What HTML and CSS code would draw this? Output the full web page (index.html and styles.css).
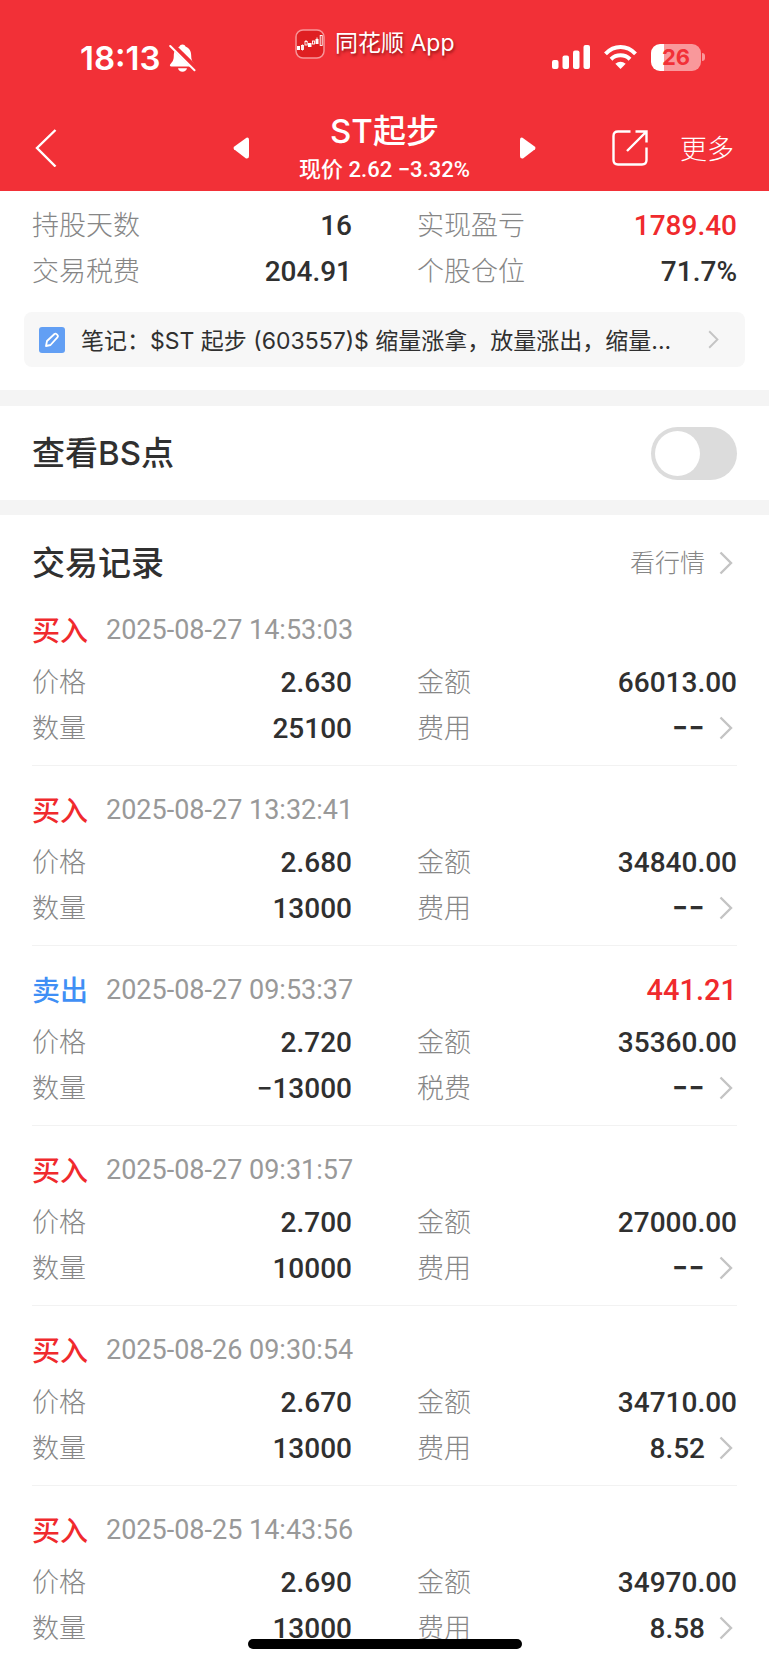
FILE: index.html
```html
<!DOCTYPE html>
<html lang="zh-CN">
<head>
<meta charset="utf-8">
<meta name="viewport" content="width=device-width, initial-scale=1">
<title>ST起步</title>
<link rel="stylesheet" href="styles.css">
</head>
<body>
<svg class="defs" aria-hidden="true">
  <symbol id="chevron" viewBox="0 0 14 24"><path d="M1.500 1.500L12 12L1.500 22.500" fill="none" stroke="currentColor" stroke-width="2.400"/></symbol>
</svg>
<header class="top">
  <div class="status">
    <div class="status-time">
      <span class="clock">18:13</span>
      <svg class="bell" viewBox="0 0 27 28" aria-hidden="true">
        <path d="M13.500 .5c-1.500 0-2.600.8-3 2C6.500 4 4.800 7.500 4.800 11.500c0 5-1.500 6.500-3.500 8.700-.8 1-.4 2.300 1 2.300h22.400c1.400 0 1.800-1.300 1-2.300-2-2.200-3.500-3.700-3.500-8.700 0-4-1.700-7.500-5.700-9-.4-1.200-1.500-2-3-2zM9 24.300h9c-.5 2-2.200 3.400-4.500 3.400S9.500 26.300 9 24.300z" fill="#fff"/>
        <path d="M2.500.5L27 24.500" stroke="#f23037" stroke-width="5.500"/>
        <path d="M1.200 2L25.500 26.300" stroke="#fff" stroke-width="2" stroke-linecap="round"/>
      </svg>
    </div>
    <div class="app-tag">
      <svg class="app-icon" viewBox="0 0 30 30" aria-hidden="true">
        <rect x="1" y="1" width="28" height="28" rx="7" fill="#df1f22" stroke="#f79598" stroke-width="1.500"/>
        <g fill="#fff"><rect x="2" y="17" width="3" height="4"/><rect x="13" y="14" width="3.500" height="4"/><rect x="20.500" y="10" width="3" height="5"/></g>
        <g fill="none" stroke="#fff" stroke-width=".9"><rect x="6.500" y="16.500" width="2" height="4"/><rect x="10" y="12.500" width="2.200" height="3.500"/><path d="M11 11v1.500M22 8.500v2M7.500 15.500v6"/><rect x="17.500" y="12" width="2" height="3"/><rect x="25.200" y="6.500" width="2" height="10"/></g>
      </svg>
      <span>同花顺 App</span>
    </div>
    <div class="status-icons">
      <svg class="signal" viewBox="0 0 38 24" fill="#fff" aria-hidden="true"><rect y="15" width="6.500" height="9" rx="2"/><rect x="10.500" y="10.500" width="6.500" height="13.500" rx="2"/><rect x="21" y="5.500" width="6.500" height="18.500" rx="2"/><rect x="31.500" width="6.500" height="24" rx="2"/></svg>
      <svg class="wifi" viewBox="0 0 33 24" aria-hidden="true"><g fill="none" stroke="#fff" stroke-width="4"><path d="M1.500 8.800Q8 2 16.500 2T31.500 8.800"/><path d="M7 14.200Q11 10.300 16.500 10.300T26 14.200"/></g><path d="M16.500 24l-5.200-5.200q5.200-4 10.400 0z" fill="#fff"/></svg>
      <div class="battery"><span>26</span></div>
      <span class="battery-cap"></span>
    </div>
  </div>
  <nav class="nav">
    <button class="plain back" aria-label="返回"><svg viewBox="0 0 22 38"><path d="M20.500 1L2 19L20.500 37.500" fill="none" stroke="#fff" stroke-width="2.400"/></svg></button>
    <div class="stock">
      <button class="plain tri" aria-label="上一只"><svg viewBox="0 0 16 22"><path d="M13.500 .7L1 9.700Q0 11 1 12.300L13 21.500Q16 22 16 19V3Q16 0 13.500 .7z" fill="#fff"/></svg></button>
      <div class="stock-text">
        <h1>ST起步</h1>
        <p>现价 2.62 −3.32%</p>
      </div>
      <button class="plain tri" aria-label="下一只"><svg viewBox="0 0 16 22"><path d="M2.500 .7L15 9.700Q16 11 15 12.300L3 21.500Q0 22 0 19V3Q0 0 2.500 .7z" fill="#fff"/></svg></button>
    </div>
    <div class="actions">
      <button class="plain share" aria-label="分享"><svg viewBox="0 0 36 36" fill="none" stroke="#fff" stroke-width="2.400"><path d="M18.500 1.500H6Q1.500 1.500 1.500 6V30Q1.500 34.500 6 34.500H30Q34.500 34.500 34.500 30V17.500"/><path d="M23.500 1.500H34.500V12.500M34 2L15 21"/></svg></button>
      <button class="plain more">更多</button>
    </div>
  </nav>
</header>

<main>
  <section class="summary">
    <dl class="pairs">
      <div><dt>持股天数</dt><dd>16</dd></div>
      <div><dt>实现盈亏</dt><dd class="red">1789.40</dd></div>
      <div><dt>交易税费</dt><dd>204.91</dd></div>
      <div><dt>个股仓位</dt><dd>71.7%</dd></div>
    </dl>
    <a class="note" href="#">
      <svg class="pen" viewBox="0 0 26 26" aria-hidden="true"><rect width="26" height="26" rx="3" fill="#629ff4"/><path d="M7 19l1-5 7.500-7q1-.8 2 .2l1 1q1 1 .1 2L11.500 18z" fill="none" stroke="#fff" stroke-width="1.800" stroke-linejoin="round"/></svg>
      <span class="note-text">笔记：$ST 起步 (603557)$ 缩量涨拿，放量涨出，缩量...</span>
      <svg class="chev small"><use href="#chevron"/></svg>
    </a>
  </section>

  <section class="bs">
    <label for="bs">查看BS点</label>
    <input id="bs" class="toggle" type="checkbox" role="switch">
  </section>

  <section class="records">
    <div class="records-head">
      <h2>交易记录</h2>
      <a href="#"><span>看行情</span><svg class="chev"><use href="#chevron"/></svg></a>
    </div>

    <article class="record">
      <div class="record-head"><strong>买入</strong><time>2025-08-27 14:53:03</time></div>
      <dl class="pairs">
        <div><dt>价格</dt><dd>2.630</dd></div>
        <div><dt>金额</dt><dd>66013.00</dd></div>
        <div><dt>数量</dt><dd>25100</dd></div>
        <div><dt>费用</dt><dd><span class="dash">--</span><svg class="chev"><use href="#chevron"/></svg></dd></div>
      </dl>
    </article>
    <article class="record">
      <div class="record-head"><strong>买入</strong><time>2025-08-27 13:32:41</time></div>
      <dl class="pairs">
        <div><dt>价格</dt><dd>2.680</dd></div>
        <div><dt>金额</dt><dd>34840.00</dd></div>
        <div><dt>数量</dt><dd>13000</dd></div>
        <div><dt>费用</dt><dd><span class="dash">--</span><svg class="chev"><use href="#chevron"/></svg></dd></div>
      </dl>
    </article>
    <article class="record">
      <div class="record-head"><strong class="sell">卖出</strong><time>2025-08-27 09:53:37</time><span class="profit">441.21</span></div>
      <dl class="pairs">
        <div><dt>价格</dt><dd>2.720</dd></div>
        <div><dt>金额</dt><dd>35360.00</dd></div>
        <div><dt>数量</dt><dd>−13000</dd></div>
        <div><dt>税费</dt><dd><span class="dash">--</span><svg class="chev"><use href="#chevron"/></svg></dd></div>
      </dl>
    </article>
    <article class="record">
      <div class="record-head"><strong>买入</strong><time>2025-08-27 09:31:57</time></div>
      <dl class="pairs">
        <div><dt>价格</dt><dd>2.700</dd></div>
        <div><dt>金额</dt><dd>27000.00</dd></div>
        <div><dt>数量</dt><dd>10000</dd></div>
        <div><dt>费用</dt><dd><span class="dash">--</span><svg class="chev"><use href="#chevron"/></svg></dd></div>
      </dl>
    </article>
    <article class="record">
      <div class="record-head"><strong>买入</strong><time>2025-08-26 09:30:54</time></div>
      <dl class="pairs">
        <div><dt>价格</dt><dd>2.670</dd></div>
        <div><dt>金额</dt><dd>34710.00</dd></div>
        <div><dt>数量</dt><dd>13000</dd></div>
        <div><dt>费用</dt><dd>8.52<svg class="chev"><use href="#chevron"/></svg></dd></div>
      </dl>
    </article>
    <article class="record">
      <div class="record-head"><strong>买入</strong><time>2025-08-25 14:43:56</time></div>
      <dl class="pairs">
        <div><dt>价格</dt><dd>2.690</dd></div>
        <div><dt>金额</dt><dd>34970.00</dd></div>
        <div><dt>数量</dt><dd>13000</dd></div>
        <div><dt>费用</dt><dd>8.58<svg class="chev"><use href="#chevron"/></svg></dd></div>
      </dl>
    </article>
  </section>
</main>
<div class="home-bar"></div>
</body>
</html>
```
FILE: styles.css
```css
* { box-sizing: border-box; }
html { height: 100%; overflow: hidden; }
body {
  margin: 0;
  height: 100%;
  overflow: hidden;
  background: #fff;
  color: #303030;
  font-family: Inter, "Noto Sans CJK SC", sans-serif;
}
h1, h2, p, dl, dd { margin: 0; }
a { color: inherit; text-decoration: none; }
svg { display: block; flex: none; }
.defs { position: absolute; width: 0; height: 0; }
.plain {
  border: 0;
  padding: 0;
  background: none;
  color: inherit;
  font: inherit;
}

.top { background: #f23037; color: #fff; }
.status {
  display: grid;
  grid-template-columns: 215px 1fr auto;
  height: 104px;
  padding: 0 64px 0 80px;
}
.status-time { display: flex; align-items: center; gap: 8px; height: 116px; }
.clock { font-size: 33px; font-weight: 600; }
.bell { width: 27px; height: 28px; }
.app-tag {
  display: flex;
  align-items: center;
  gap: 10px;
  height: 88px;
  font-size: 23px;
  line-height: 32px;
  text-shadow: 1px 2px 3px rgba(80, 0, 0, .6);
}
.app-tag span { padding-bottom: 2px; }
.app-icon { width: 30px; height: 30px; }
.status-icons { display: flex; align-items: center; justify-content: flex-end; height: 114px; }
.signal { width: 38px; height: 24px; margin-right: 14px; }
.wifi { width: 33px; height: 24px; margin-right: 14px; }
.battery {
  width: 50px;
  height: 27px;
  border-radius: 9px;
  background: linear-gradient(90deg, #fff 26%, #f9989b 26%);
  color: #f23037;
  font-size: 22px;
  font-weight: 700;
  line-height: 27px;
  text-align: center;
}
.battery-cap { width: 3px; height: 8px; margin-left: 1px; border-radius: 0 4px 4px 0; background: #f9989b; }

.nav {
  display: grid;
  grid-template-columns: 1fr 304px 1fr;
  align-items: center;
  height: 87px;
  padding: 0 35px;
}
.back { width: 22px; height: 38px; }
.stock { display: flex; align-items: center; justify-content: space-between; }
.tri { width: 16px; height: 22px; }
.stock-text { text-align: center; }
.stock-text h1 { font-size: 33px; line-height: 44px; font-weight: 500; }
.stock-text p { font: 500 22px/34px Roboto, "Noto Sans CJK SC", sans-serif; }
.actions { display: flex; align-items: center; justify-content: flex-end; gap: 32px; }
.share { width: 36px; height: 36px; }
.more { font-size: 27px; font-weight: 300; }

.summary { padding: 11px 24px 23px; border-bottom: 16px solid #f4f4f4; }
.summary .pairs { padding: 0 8px; }
.pairs { display: grid; grid-template-columns: 1fr 1fr; column-gap: 65px; }
.pairs div { display: flex; align-items: center; justify-content: space-between; height: 46px; }
.pairs dt { padding-bottom: 3px; color: #868686; font-size: 27px; font-weight: 300; }
.pairs dd { display: flex; align-items: center; font: 500 28px Roboto, sans-serif; }
.pairs .dash { font-family: Inter, sans-serif; font-size: 36px; line-height: 40px; padding-bottom: 4px; }
.pairs .red, .profit { color: #f02a2d; }
.chev { width: 14px; height: 24px; margin: 0 4px 0 14px; color: #c4c4c4; }
.small { width: 11px; height: 19px; margin: 0; }
.note {
  display: flex;
  align-items: center;
  height: 55px;
  margin-top: 18px;
  padding: 0 26px 0 15px;
  border-radius: 8px;
  background: #f7f7f7;
}
.pen { width: 26px; height: 26px; margin-right: 16px; }
.note-text { flex: 1; overflow: hidden; padding-bottom: 2px; font-size: 23px; white-space: nowrap; }

.bs {
  display: flex;
  align-items: center;
  justify-content: space-between;
  height: 109px;
  padding: 0 32px;
  border-bottom: 15px solid #f4f4f4;
  font-size: 33px;
  font-weight: 500;
}
.bs label { padding-bottom: 4px; }
.toggle {
  display: flex;
  align-items: center;
  appearance: none;
  width: 86px;
  height: 53px;
  margin: 0;
  padding: 0 4px;
  border-radius: 27px;
  background: #dcdcdc;
}
.toggle::before { content: ""; width: 45px; height: 45px; border-radius: 50%; background: #fff; }
.toggle:checked { justify-content: flex-end; background: #f23037; }

.records { padding: 24px 32px 0; }
.records-head { display: flex; align-items: center; justify-content: space-between; height: 47px; }
.records-head h2 { padding-bottom: 4px; font-size: 33px; font-weight: 500; }
.records-head a { display: flex; align-items: center; color: #868686; font-size: 25px; font-weight: 300; }
.records-head span { padding-bottom: 3px; }
.record { padding: 21px 0 14px; border-bottom: 1px solid #f2f2f2; }
.record-head { display: flex; align-items: center; height: 46px; margin-bottom: 6px; }
.record-head strong { width: 74px; padding-bottom: 3px; color: #f02a2d; font-size: 28px; font-weight: 500; }
.record-head .sell { color: #3f8ff5; }
.record-head time { color: #999; font: 400 27px Roboto, sans-serif; }
.profit { margin-left: auto; font: 500 29px Roboto, sans-serif; }

.home-bar {
  position: fixed;
  bottom: 16px;
  left: 50%;
  width: 274px;
  height: 10px;
  margin-left: -137px;
  border-radius: 5px;
  background: #000;
}
```
